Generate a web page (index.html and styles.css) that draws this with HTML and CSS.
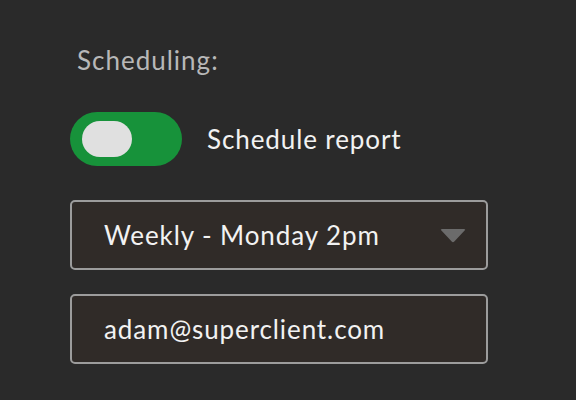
FILE: index.html
```html
<!DOCTYPE html>
<html lang="en">
<head>
    <meta charset="UTF-8">
    <meta name="viewport" content="width=device-width, initial-scale=1.0">
    <title>Scheduling</title>
    <link rel="stylesheet" href="styles.css">
</head>
<body>
    <div class="scheduling">
        <p class="section-label">Scheduling:</p>
        <div class="toggle-row">
            <span class="toggle on"><span class="knob"></span></span>
            <span class="toggle-text">Schedule report</span>
        </div>
        <div class="field select">
            <span>Weekly - Monday 2pm</span>
            <svg class="caret" width="26" height="15" viewBox="0 0 26 15">
                <path d="M2 1 H24 Q26 1 24.6 2.6 L14.3 13.6 Q13 15 11.7 13.6 L1.4 2.6 Q0 1 2 1 Z" fill="#6b6b6b"/>
            </svg>
        </div>
        <div class="field">
            <span>adam@superclient.com</span>
        </div>
    </div>
</body>
</html>
```

FILE: styles.css
```css
* {
    margin: 0;
    padding: 0;
    box-sizing: border-box;
}

html, body {
    width: 100%;
    height: 100%;
    background-color: #2a2a2a;
    font-family: "Lato", "Liberation Sans", sans-serif;
    overflow: hidden;
}

.scheduling {
    display: flex;
    flex-direction: column;
    padding-top: 44px;
    padding-left: 70px;
    width: 488px;
}

.section-label {
    font-size: 26px;
    line-height: 32px;
    letter-spacing: 1px;
    color: #b8b8b8;
    padding-left: 7px;
    margin-bottom: 36px;
}

.toggle-row {
    display: flex;
    align-items: center;
    gap: 25px;
    margin-bottom: 34px;
}

.toggle {
    display: flex;
    align-items: center;
    width: 112px;
    height: 54px;
    border-radius: 27px;
    background-color: #17923a;
    padding-left: 12px;
}

.knob {
    width: 50px;
    height: 36px;
    border-radius: 18px;
    background-color: #e0e0e0;
}

.toggle-text {
    font-size: 26px;
    letter-spacing: 0.9px;
    color: #f2f2f2;
}

.field {
    display: flex;
    align-items: center;
    justify-content: space-between;
    height: 70px;
    border: 2px solid #9c9c9c;
    border-radius: 5px;
    background-color: #302b28;
    padding: 0 20px 0 32px;
    font-size: 26px;
    letter-spacing: 0.9px;
    color: #f2f2f2;
    margin-bottom: 24px;
}
```
